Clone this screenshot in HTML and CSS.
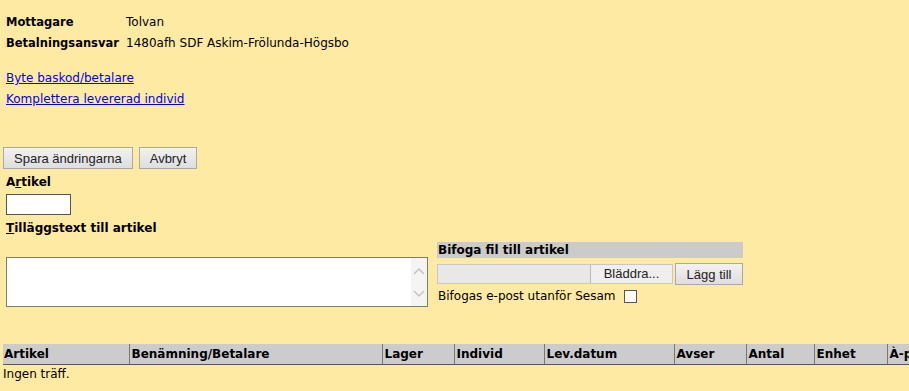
FILE: index.html
```html
<!DOCTYPE html>
<html lang="sv">
<head>
<meta charset="utf-8">
<title>Artikel</title>
<link rel="stylesheet" href="styles.css">
</head>
<body>
<div class="page">
  <div class="info">
    <div class="info-label">Mottagare</div><div class="info-value">Tolvan</div>
    <div class="info-label">Betalningsansvar</div><div class="info-value">1480afh SDF Askim-Frölunda-Högsbo</div>
  </div>

  <div class="links">
    <a href="#">Byte baskod/betalare</a>
    <a href="#">Komplettera levererad individ</a>
  </div>

  <div class="actions">
    <button class="btn">Spara ändringarna</button>
    <button class="btn">Avbryt</button>
  </div>

  <label class="field-label"><span>A<u>r</u>tikel</span></label>
  <input class="artikel-input" type="text">
  <label class="field-label extra-label"><u>T</u>illäggstext till artikel</label>

  <div class="extra-row">
    <div class="textarea-box">
      <textarea class="textarea"></textarea>
      <div class="fake-scroll">
        <svg width="12" height="8" viewBox="0 0 12 8"><path d="M1 7 L6 2 L11 7" fill="none" stroke="#c4c4c4" stroke-width="1.5"/></svg>
        <svg width="12" height="8" viewBox="0 0 12 8"><path d="M1 1 L6 6 L11 1" fill="none" stroke="#c4c4c4" stroke-width="1.5"/></svg>
      </div>
    </div>
    <div class="attach">
      <div class="attach-head">Bifoga fil till artikel</div>
      <div class="attach-row">
        <div class="file-input">
          <div class="file-name"></div>
          <div class="file-btn">Bläddra...</div>
        </div>
        <button class="btn add-btn">Lägg till</button>
      </div>
      <div class="attach-check">
        <span>Bifogas e-post utanför Sesam</span>
        <span class="checkbox"></span>
      </div>
    </div>
  </div>

  <div class="table-wrap">
    <table class="grid">
      <colgroup>
        <col class="c1"><col class="c2"><col class="c3"><col class="c4"><col class="c5">
        <col class="c6"><col class="c7"><col class="c8"><col class="c9">
      </colgroup>
      <thead>
        <tr>
          <th class="first">Artikel</th>
          <th>Benämning/Betalare</th>
          <th>Lager</th>
          <th>Individ</th>
          <th>Lev.datum</th>
          <th>Avser</th>
          <th>Antal</th>
          <th>Enhet</th>
          <th>À-pris</th>
        </tr>
      </thead>
    </table>
    <div class="empty">Ingen träff.</div>
  </div>
</div>
</body>
</html>
```

FILE: styles.css
```css
html, body {
  margin: 0;
  padding: 0;
  background: #ffeaa3;
  overflow: hidden;
}
body {
  font-family: "DejaVu Sans", Verdana, sans-serif;
  font-size: 12px;
  color: #000;
}
.page {
  padding: 0 0 0 3px;
}
.info {
  display: grid;
  grid-template-columns: 120px auto;
  grid-auto-rows: 21px;
  align-items: center;
  padding: 11px 0 0 3px;
}
.info-label {
  font-weight: bold;
  font-size: 11.5px;
}
.links {
  display: flex;
  flex-direction: column;
  align-items: flex-start;
  padding: 15px 0 0 3px;
}
.links a {
  color: #0000ee;
  line-height: 21px;
}
.actions {
  display: flex;
  gap: 6px;
  padding-top: 37px;
}
.btn {
  font-family: "Liberation Sans", Arial, sans-serif;
  font-size: 13px;
  height: 22px;
  padding: 0 10px;
  background: linear-gradient(#f2f2f2, #dedede);
  border: 1px solid #a9a9a9;
  border-radius: 0;
  color: #222;
}
.field-label {
  display: block;
  font-weight: bold;
  margin: 6px 0 0 3px;
  line-height: 15px;
}
.artikel-input {
  display: block;
  box-sizing: border-box;
  width: 65px;
  height: 21px;
  margin: 4px 0 0 3px;
  border: 1px solid #555;
  background: #fff;
  padding: 0;
}
.extra-label {
  margin-top: 6px;
}
.extra-row {
  display: flex;
  align-items: flex-end;
  gap: 9px;
  margin: 6px 0 0 3px;
}
.textarea-box {
  box-sizing: border-box;
  width: 422px;
  height: 50px;
  border: 1px solid #7d7d6d;
  background: #fff;
  display: flex;
}
.textarea {
  flex: 1;
  border: 0;
  resize: none;
  outline: none;
  margin: 0;
  padding: 2px;
}
.fake-scroll {
  width: 16px;
  background: #f4f4f4;
  display: flex;
  flex-direction: column;
  justify-content: space-between;
  align-items: center;
  padding: 9px 0 8px;
}
.attach {
  width: 306px;
  display: flex;
  flex-direction: column;
}
.attach-head {
  background: #cbcbcb;
  font-weight: bold;
  height: 16px;
  line-height: 16px;
  padding-left: 1px;
}
.attach-row {
  display: flex;
  gap: 2px;
  margin-top: 5px;
  align-items: flex-start;
}
.file-input {
  display: flex;
  height: 20px;
  margin-top: 1px;
  border: 1px solid #c8c8c8;
  box-sizing: border-box;
  background: #e8e8e8;
}
.file-name {
  width: 152px;
}
.file-btn {
  width: 82px;
  box-sizing: border-box;
  border-left: 1px solid #bbb;
  background: #efefef;
  font-family: "Liberation Sans", Arial, sans-serif;
  font-size: 13px;
  line-height: 18px;
  text-align: center;
  color: #222;
}
.add-btn {
  width: 68px;
  padding: 0;
}
.attach-check {
  display: flex;
  align-items: center;
  gap: 8px;
  height: 22px;
  padding-left: 1px;
}
.checkbox {
  width: 11px;
  height: 11px;
  border: 1px solid #555;
  background: #fff;
}
.table-wrap {
  margin-top: 37px;
  overflow: hidden;
}
.grid {
  border-collapse: collapse;
  table-layout: fixed;
  width: 944px;
}
.grid th {
  background: #cccccc;
  font-weight: bold;
  text-align: left;
  height: 20px;
  padding: 0 0 0 2px;
  border-bottom: 1px solid #555;
  border-left: 1px solid #777;
  white-space: nowrap;
  overflow: hidden;
}
.grid th.first { border-left: 0; padding-left: 1px; }
.c1 { width: 126px; }
.c2 { width: 253px; }
.c3 { width: 72px; }
.c4 { width: 90px; }
.c5 { width: 130px; }
.c6 { width: 72px; }
.c7 { width: 68px; }
.c8 { width: 73px; }
.c9 { width: 60px; }
.empty {
  line-height: 19px;
}
```
